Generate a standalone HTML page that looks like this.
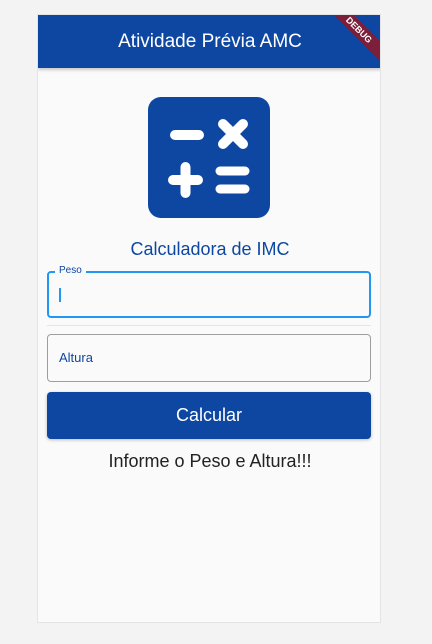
<!DOCTYPE html>
<html><head><meta charset="utf-8"><style>
body{margin:0;width:432px;height:644px;background:#f3f3f3;font-family:"Liberation Sans",Roboto,sans-serif;position:relative;overflow:hidden}
.frame{position:absolute;left:37px;top:14px;width:344px;height:609px;background:#fafafa;border:1px solid #e4e4e4;box-sizing:border-box;overflow:hidden}
.bar{position:absolute;left:0;top:0;width:344px;height:53px;background:#0d47a1;color:#fff;font-size:19px;text-align:center;line-height:54px;box-shadow:0 2px 3px rgba(0,0,0,.2)}
.debug{position:absolute;right:-22px;top:8px;width:90px;height:14px;background:#7b1f3a;color:#fff;font-size:9px;font-weight:bold;text-align:center;line-height:14px;transform:rotate(45deg)}
.abs{position:absolute}
</style></head><body>
<div class="frame">
<div class="bar">Atividade Prévia AMC<div class="debug">DEBUG</div></div>
<svg class="abs" style="left:110px;top:82px" width="122" height="121" viewBox="0 0 122 121">
<rect width="122" height="121" rx="13" fill="#0d47a1"/>
<g stroke="#fff" stroke-linecap="round" fill="none">
<line x1="27" y1="38" x2="51" y2="38" stroke-width="10"/>
<line x1="75" y1="27" x2="95" y2="47" stroke-width="10"/>
<line x1="95" y1="27" x2="75" y2="47" stroke-width="10"/>
<line x1="25" y1="83" x2="50" y2="83" stroke-width="10"/>
<line x1="37.5" y1="70" x2="37.5" y2="96" stroke-width="10"/>
<line x1="72" y1="74" x2="97" y2="74" stroke-width="9"/>
<line x1="72" y1="92" x2="97" y2="92" stroke-width="9"/>
</g></svg>
<div class="abs" style="left:0;width:344px;top:224px;text-align:center;font-size:18px;color:#0d47a1">Calculadora de IMC</div>
<div class="abs" style="left:9px;top:256px;width:324px;height:47px;border:2px solid #2196f3;border-radius:4px;box-sizing:border-box"></div>
<div class="abs" style="left:17px;top:250px;padding:0 4px;background:#fafafa;font-size:10px;color:#0d47a1">Peso</div>
<div class="abs" style="left:21px;top:273px;width:2px;height:14px;background:#2196f3"></div>
<div class="abs" style="left:9px;top:310px;width:324px;height:1px;background:#e6e6e6"></div>
<div class="abs" style="left:9px;top:319px;width:324px;height:48px;border:1px solid #9e9e9e;border-radius:4px;box-sizing:border-box"></div>
<div class="abs" style="left:21px;top:335px;font-size:13px;color:#0d47a1">Altura</div>
<div class="abs" style="left:9px;top:377px;width:324px;height:47px;background:#0d47a1;border-radius:4px;box-shadow:0 1px 3px rgba(0,0,0,.25);color:#fff;font-size:18px;text-align:center;line-height:47px">Calcular</div>
<div class="abs" style="left:0;width:344px;top:436px;text-align:center;font-size:18px;color:#222">Informe o Peso e Altura!!!</div>
</div>
</body></html>
